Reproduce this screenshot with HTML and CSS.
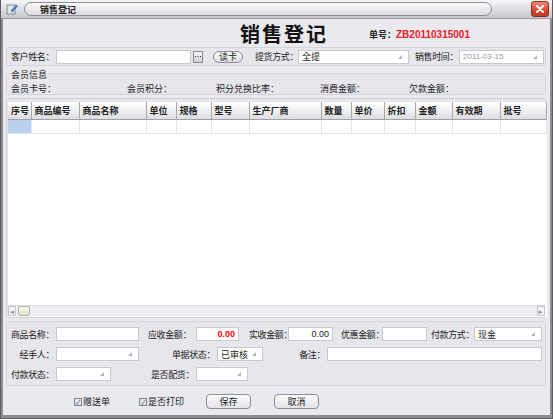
FILE: index.html
```html
<!DOCTYPE html>
<html lang="zh-CN">
<head>
    <meta charset="UTF-8">
    <title>销售登记</title>
    <link rel="stylesheet" href="styles.css">
</head>
<body>
<div class="window">
    <!-- title bar -->
    <div class="titlebar">
        <svg class="app-icon" width="12" height="12" viewBox="0 0 12 12">
            <rect x="1" y="2" width="8" height="9" fill="#dfe6ee" stroke="#6b7a8c" stroke-width="0.8"/>
            <path d="M5 8 L10 2 L11.5 3 L6.5 9 Z" fill="#4f7fc0" stroke="#2d4e7e" stroke-width="0.5"/>
        </svg>
        <div class="title-pill"><span>销售登记</span></div>
        <div class="close-btn">
            <svg width="10" height="10" viewBox="0 0 10 10">
                <path d="M2 2 L8 8 M8 2 L2 8" stroke="#fff" stroke-width="2" stroke-linecap="round"/>
            </svg>
        </div>
    </div>

    <div class="content">
        <div class="heading">
            <h1>销售登记</h1>
            <span class="no-label">单号：</span>
            <span class="no-value">ZB20110315001</span>
        </div>

        <!-- customer row -->
        <div class="group row-customer">
            <span class="lbl">客户姓名：</span>
            <span class="box w-name"></span>
            <span class="dots-btn">
                <svg width="6" height="2" viewBox="0 0 6 2">
                    <rect x="0" y="0" width="1" height="1" fill="#333"/>
                    <rect x="2.5" y="0" width="1" height="1" fill="#333"/>
                    <rect x="5" y="0" width="1" height="1" fill="#333"/>
                </svg>
            </span>
            <span class="pill-btn">读卡</span>
            <span class="lbl gap-pick">提货方式：</span>
            <span class="box combo w-pick">全提</span>
            <span class="lbl gap-time">销售时间：</span>
            <span class="box combo disabled w-time">2011-03-15</span>
        </div>

        <!-- member info -->
        <div class="group member">
            <span class="legend">会员信息</span>
            <div class="member-row">
                <span class="m1">会员卡号：</span>
                <span class="m2">会员积分：</span>
                <span class="m3">积分兑换比率：</span>
                <span class="m4">消费金额：</span>
                <span class="m5">欠款金额：</span>
            </div>
        </div>

        <!-- goods grid -->
        <div class="group grid">
            <div class="grid-body">
                <table>
                    <colgroup>
                        <col style="width:23px"><col style="width:48px"><col style="width:67px">
                        <col style="width:30px"><col style="width:35px"><col style="width:38px">
                        <col style="width:72px"><col style="width:30px"><col style="width:33px">
                        <col style="width:31px"><col style="width:37px"><col style="width:48px">
                        <col style="width:46px">
                    </colgroup>
                    <thead>
                        <tr>
                            <th>序号</th><th>商品编号</th><th>商品名称</th><th>单位</th><th>规格</th>
                            <th>型号</th><th>生产厂商</th><th>数量</th><th>单价</th><th>折扣</th>
                            <th>金额</th><th>有效期</th><th>批号</th>
                        </tr>
                    </thead>
                    <tbody>
                        <tr>
                            <td class="sel"></td><td></td><td></td><td></td><td></td><td></td><td></td>
                            <td></td><td></td><td></td><td></td><td></td><td></td>
                        </tr>
                    </tbody>
                </table>
                <div class="grid-space"></div>
                <div class="hscroll">
                    <span class="arrow">◂</span>
                    <span class="thumb"></span>
                    <span class="track"></span>
                    <span class="arrow">▸</span>
                </div>
            </div>
        </div>

        <!-- detail fields -->
        <div class="group detail">
            <div class="drow">
                <span class="lbl w-l1">商品名称：</span>
                <span class="box w-goods"></span>
                <span class="lbl w-l2">应收金额：</span>
                <span class="box num red w-due">0.00</span>
                <span class="lbl w-l3">实收金额：</span>
                <span class="box num w-paid">0.00</span>
                <span class="lbl w-l4">优惠金额：</span>
                <span class="box w-disc"></span>
                <span class="lbl w-l5">付款方式：</span>
                <span class="box combo w-pay">现金</span>
            </div>
            <div class="drow">
                <span class="lbl right w-l1">经手人：</span>
                <span class="box combo w-goods"></span>
                <span class="lbl right w-l6">单据状态：</span>
                <span class="box combo w-state">已审核</span>
                <span class="lbl right w-l7">备注：</span>
                <span class="box w-memo"></span>
            </div>
            <div class="drow">
                <span class="lbl w-l1">付款状态：</span>
                <span class="box combo w-paystate"></span>
                <span class="lbl right w-l8">是否配货：</span>
                <span class="box combo w-ship"></span>
            </div>
        </div>

        <!-- footer -->
        <div class="footer">
            <label class="chk"><span class="tick">✓</span>赠送单</label>
            <label class="chk chk2"><span class="tick">✓</span>是否打印</label>
            <span class="btn save">保存</span>
            <span class="btn">取消</span>
        </div>
    </div>
</div>
</body>
</html>
```

FILE: styles.css
```css
* {
    box-sizing: border-box;
    margin: 0;
    padding: 0;
}

body {
    width: 553px;
    height: 419px;
    overflow: hidden;
    background: #ffffff;
    font-family: "Noto Sans CJK SC", "DejaVu Sans", sans-serif;
    font-size: 9px;
    color: #222;
}

/* window frame */
.window {
    width: 553px;
    height: 419px;
    background: #e9e9ee;
    border: 1px solid #5a5a60;
    border-top: none;
    box-shadow: inset 2px 0 0 #8c8c94, inset -2px 0 0 #8c8c94, inset 0 -3px 0 #8c8c94;
    display: flex;
    flex-direction: column;
}

.titlebar {
    height: 19px;
    display: flex;
    align-items: center;
    padding: 0 3px 0 5px;
    background: linear-gradient(#f6f6f8, #dcdce0 55%, #c6c6cc);
    border-bottom: 1px solid #9a9aa2;
}

.app-icon {
    flex: none;
}

.title-pill {
    margin-left: 6px;
    width: 468px;
    height: 14px;
    border: 1px solid #8e8e96;
    border-radius: 7px;
    background: linear-gradient(#fafafa, #dadade);
    padding-left: 15px;
    display: flex;
    align-items: center;
    font-weight: bold;
    color: #222;
}

.close-btn {
    margin-left: auto;
    width: 18px;
    height: 16px;
    border: 1px solid #8a2a20;
    border-radius: 3px;
    background: linear-gradient(#f08a78, #d8482f 60%, #c23a24);
    display: flex;
    align-items: center;
    justify-content: center;
}

.content {
    flex: 1;
    padding: 0 6px 0 5px;
    display: flex;
    flex-direction: column;
}

/* heading */
.heading {
    height: 28px;
    display: flex;
    align-items: center;
    padding-left: 234px;
}

.heading h1 {
    font-size: 20px;
    font-weight: bold;
    letter-spacing: 2px;
    color: #111;
}

.no-label {
    margin-left: 41px;
    margin-top: 2px;
    font-weight: bold;
}

.no-value {
    margin-top: 2px;
    font-family: "Liberation Sans", Arial, sans-serif;
    font-size: 10px;
    font-weight: bold;
    color: #e8202a;
}

/* group boxes */
.group {
    border: 1px solid #d4d4dc;
    border-radius: 3px;
    background: #e6e6eb;
}

.lbl {
    flex: none;
    white-space: nowrap;
    letter-spacing: -0.4px;
}

.box {
    flex: none;
    height: 14px;
    background: #fff;
    border: 1px solid #c8c8d0;
    display: flex;
    align-items: center;
    padding: 0 3px;
    position: relative;
    white-space: nowrap;
}

.combo::after {
    content: "";
    position: absolute;
    right: 6px;
    top: 4px;
    width: 0;
    height: 0;
    border-left: 4px solid transparent;
    border-bottom: 4px solid #b4b4bc;
}

.disabled {
    color: #9a9aa0;
    font-family: "Liberation Sans", Arial, sans-serif;
    font-size: 8px;
}

.row-customer {
    height: 19px;
    display: flex;
    align-items: center;
    padding-left: 4px;
}

.row-customer .lbl {
    width: 45px;
}

.w-name { width: 135px; }

.dots-btn {
    margin-left: 2px;
    width: 10px;
    height: 12px;
    border: 1px solid #8a8a90;
    background: linear-gradient(#f8f8f8, #d0d0d4);
    display: flex;
    align-items: center;
    justify-content: center;
}

.pill-btn {
    margin-left: 10px;
    width: 30px;
    height: 12px;
    border: 1px solid #8a8a92;
    border-radius: 6px;
    background: linear-gradient(#fbfbfb, #dedee2);
    display: flex;
    align-items: center;
    justify-content: center;
}

.row-customer .gap-pick { margin-left: 12px; width: 43px; }
.w-pick { width: 111px; }
.row-customer .gap-time { margin-left: 6px; width: 44px; }
.w-time { width: 85px; }

/* member info */
.member {
    margin-top: 7px;
    height: 22px;
    position: relative;
    padding: 8px 0 0 4px;
}

.legend {
    position: absolute;
    left: 3px;
    top: -6px;
    padding: 0 1px;
    background: #e9e9ee;
}

.member-row {
    display: flex;
}

.m1 { width: 116px; }
.m2 { width: 89px; }
.m3 { width: 104px; }
.m4 { width: 89px; }

/* grid */
.grid {
    margin-top: 3px;
    height: 220px;
    padding: 3px 0 0 1px;
    display: flex;
    border-color: #d0d0d8;
}

.grid-body {
    flex: 1;
    background: #fff;
    display: flex;
    flex-direction: column;
}

table {
    border-collapse: collapse;
    table-layout: fixed;
    width: 538px;
}

th {
    height: 17px;
    text-align: left;
    padding-left: 3px;
    font-weight: bold;
    background: linear-gradient(#ffffff, #ececee 60%, #dcdce0);
    border-right: 1px solid #a8a8b0;
    border-bottom: 1px solid #a0a0a8;
    white-space: nowrap;
    overflow: hidden;
}

td {
    height: 14px;
    border-right: 1px solid #e4e4e8;
    border-bottom: 1px solid #e4e4e8;
}

td.sel {
    background: #b9d0ee;
}

.grid-space {
    flex: 1;
}

.hscroll {
    height: 11px;
    margin: 0 2px 1px 0;
    display: flex;
    align-items: center;
    background: #eeeef2;
    border-top: 1px solid #dcdce2;
}

.arrow {
    width: 8px;
    height: 10px;
    border: 1px solid #c4c4cc;
    background: #f4f4f6;
    font-size: 7px;
    line-height: 8px;
    color: #888;
    text-align: center;
}

.thumb {
    margin-left: 2px;
    width: 12px;
    height: 10px;
    border: 1px solid #b4b4a4;
    border-radius: 2px;
    background: linear-gradient(#f6f6ea, #e2e2d0);
}

.track {
    flex: 1;
}

/* detail */
.detail {
    margin-top: 3px;
    height: 65px;
    padding: 5px 0 0 4px;
    display: flex;
    flex-direction: column;
    gap: 6px;
}

.drow {
    display: flex;
    align-items: center;
}

.right { text-align: right; padding-right: 2px; }

.num {
    justify-content: flex-end;
    font-family: "Liberation Sans", Arial, sans-serif;
}

.red {
    color: #f00;
    font-weight: bold;
}

.w-l1 { width: 45px; }
.w-goods { width: 83px; }
.w-l2 { width: 57px; padding-left: 9px; }
.w-due { width: 43px; }
.w-l3 { width: 49px; padding-left: 10px; }
.w-paid { width: 45px; }
.w-l4 { width: 49px; padding-left: 8px; }
.w-disc { width: 45px; }
.w-l5 { width: 47px; padding-left: 4px; }
.w-pay { width: 68px; }
.w-l6 { width: 78px; }
.w-state { width: 46px; }
.w-l7 { width: 64px; }
.w-memo { width: 215px; }
.w-paystate { width: 55px; }
.w-l8 { width: 85px; }
.w-ship { width: 52px; }

/* footer */
.footer {
    height: 31px;
    display: flex;
    align-items: center;
    padding-left: 68px;
}

.chk {
    display: flex;
    align-items: center;
}

.chk2 {
    margin-left: 29px;
}

.tick {
    width: 8px;
    height: 8px;
    border: 1px solid #7c8894;
    background: #e4e6ea;
    font-size: 7px;
    line-height: 6px;
    text-align: center;
    color: #5a6a7a;
    margin-right: 1px;
}

.btn {
    width: 45px;
    height: 15px;
    border: 1px solid #8c8c94;
    border-radius: 4px;
    background: linear-gradient(#fcfcfc, #e4e4e8);
    display: flex;
    align-items: center;
    justify-content: center;
    margin-left: 23px;
}

.btn.save {
    margin-left: 22px;
}
```
